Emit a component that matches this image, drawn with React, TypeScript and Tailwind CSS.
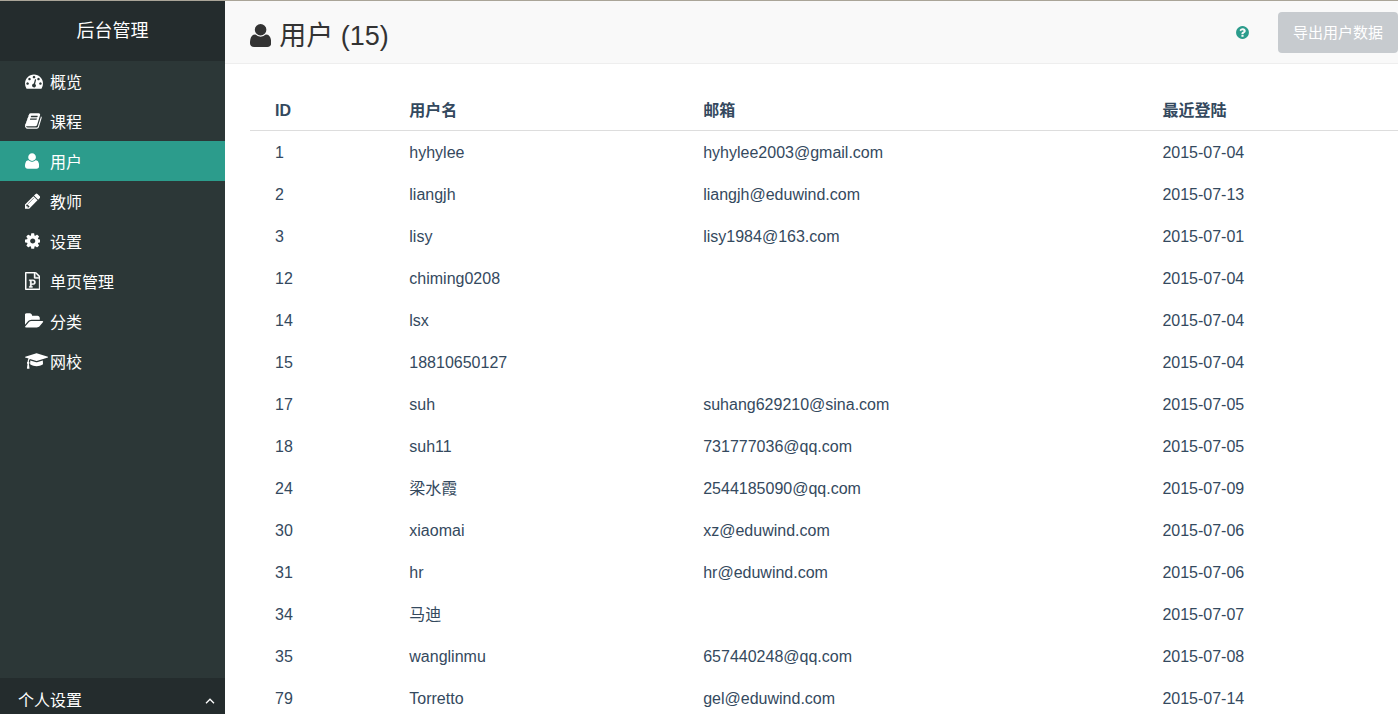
import type { ReactNode } from "react";

type IconProps = { viewBox: string; className: string; children: ReactNode };

function Icon({ viewBox, className, children }: IconProps) {
  return (
    <svg viewBox={viewBox} className={className} fill="currentColor" aria-hidden="true">
      {children}
    </svg>
  );
}

function UserIcon({ className }: { className: string }) {
  return (
    <Icon viewBox="0 0 1408 1792" className={className}>
      <path
        transform="translate(0 1536) scale(1 -1)"
        d="M1408 131q0-120-73-189.5t-194-69.5h-874q-121 0-194 69.5t-73 189.5q0 53 3.5 103.5t14 109t26.5 108.5t43 97.5t62 81t85.5 53.5t111.5 20q9 0 42-21.5t74.5-48t108-48t133.5-21.5t133.5 21.5t108 48t74.5 48t42 21.5q61 0 111.5-20t85.5-53.5t62-81t43-97.5t26.5-108.5t14-109t3.5-103.5zM1088 1024q0-159-112.5-271.5t-271.5-112.5t-271.5 112.5t-112.5 271.5t112.5 271.5t271.5 112.5t271.5-112.5t112.5-271.5z"
      />
    </Icon>
  );
}

const nav: { label: string; icon: ReactNode }[] = [
  {
    label: "概览",
    icon: (
      <Icon viewBox="0 0 1792 1792" className="h-[18px] w-auto">
        <path d="M384 1152q0-53-37.5-90.5t-90.5-37.5-90.5 37.5-37.5 90.5 37.5 90.5 90.5 37.5 90.5-37.5 37.5-90.5zm192-448q0-53-37.5-90.5t-90.5-37.5-90.5 37.5-37.5 90.5 37.5 90.5 90.5 37.5 90.5-37.5 37.5-90.5zm428 481l101-382q6-26-7.5-48.5t-38.5-29.5-48 6.5-30 39.5l-101 382q-60 5-107 43.5t-63 98.5q-20 77 20 146t117 89 146-20 89-117q16-60-6-117t-72-91zm660-33q0-53-37.5-90.5t-90.5-37.5-90.5 37.5-37.5 90.5 37.5 90.5 90.5 37.5 90.5-37.5 37.5-90.5zm-640-640q0-53-37.5-90.5t-90.5-37.5-90.5 37.5-37.5 90.5 37.5 90.5 90.5 37.5 90.5-37.5 37.5-90.5zm448 192q0-53-37.5-90.5t-90.5-37.5-90.5 37.5-37.5 90.5 37.5 90.5 90.5 37.5 90.5-37.5 37.5-90.5zm320 448q0 261-141 483-19 29-54 29h-1402q-35 0-54-29-141-221-141-483 0-182 71-348t191-286 286-191 348-71 348 71 286 191 191 286 71 348z" />
      </Icon>
    ),
  },
  {
    label: "课程",
    icon: (
      <Icon viewBox="64 0 1664 1792" className="h-[18px] w-auto">
        <path d="M1703 478q40 57 18 129l-275 906q-19 64-76.5 107.5t-122.5 43.5h-923q-77 0-148.5-53.5t-99.5-131.5q-24-67-2-127 0-4 3-27t4-37q1-8-3-21.5t-3-19.5q2-11 8-21t16.5-23.5 16.5-23.5q23-38 45-91.5t30-91.5q3-10 .5-30t-.5-28q3-11 17-28t17-23q21-36 42-92t25-90q1-9-2.5-32t.5-28q4-13 22-30.5t22-22.5q19-26 42.5-84.5t27.5-96.5q1-8-3-25.5t-2-26.5q2-8 9-18t18-23 17-21q8-12 16.5-30.5t15-35 16-36 19.5-32 26.5-23.5 36-11.5 47.5 5.5l-1 3q38-9 51-9h761q74 0 114 56t18 130l-274 906q-36 119-71.5 153.5t-128.5 34.5h-869q-27 0-38 15-11 16-1 43 24 70 144 70h923q29 0 56-15.5t35-41.5l300-987q7-22 5-57 38 15 59 43zm-1064 2q-4 13 2 22.5t20 9.5h608q13 0 25.5-9.5t16.5-22.5l21-64q4-13-2-22.5t-20-9.5h-608q-13 0-25.5 9.5t-16.5 22.5zm-83 256q-4 13 2 22.5t20 9.5h608q13 0 25.5-9.5t16.5-22.5l21-64q4-13-2-22.5t-20-9.5h-608q-13 0-25.5 9.5t-16.5 22.5z" />
      </Icon>
    ),
  },
  { label: "用户", icon: <UserIcon className="h-[18px] w-auto" /> },
  {
    label: "教师",
    icon: (
      <Icon viewBox="128 0 1536 1792" className="h-[18px] w-auto">
        <path d="M491 1536l91-91-235-235-91 91v107h128v128h107zm523-928q0-22-22-22-10 0-17 7l-542 542q-7 7-7 17 0 22 22 22 10 0 17-7l542-542q7-7 7-17zm-54-192l416 416-832 832h-416v-416zm683 96q0 53-37 90l-166 166-416-416 166-165q36-38 90-38 53 0 91 38l235 234q37 39 37 91z" />
      </Icon>
    ),
  },
  {
    label: "设置",
    icon: (
      <Icon viewBox="128 0 1536 1792" className="h-[18px] w-auto">
        <path d="M1152 896q0-106-75-181t-181-75-181 75-75 181 75 181 181 75 181-75 75-181zm512-109v222q0 12-8 23t-20 13l-185 28q-19 54-39 91 35 50 107 138 10 12 10 25t-9 23q-27 37-99 108t-94 71q-12 0-26-9l-138-108q-44 23-91 38-16 136-29 186-7 28-36 28h-222q-14 0-24.5-8.5t-11.5-21.5l-28-184q-49-16-90-37l-141 107q-10 9-25 9-14 0-25-11-126-114-165-168-7-10-7-23 0-12 8-23 15-21 51-66.5t54-70.5q-27-50-41-99l-183-27q-13-2-21-12.5t-8-23.5v-222q0-12 8-23t19-13l186-28q14-46 39-92-40-57-107-138-10-12-10-24 0-10 9-23 26-36 98.5-107.5t94.5-71.5q13 0 26 10l138 107q44-23 91-38 16-136 29-186 7-28 36-28h222q14 0 24.5 8.5t11.5 21.5l28 184q49 16 90 37l142-107q9-9 24-9 13 0 25 10 129 119 165 170 7 8 7 22 0 12-8 23-15 21-51 66.5t-54 70.5q26 50 41 98l183 28q13 2 21 12.5t8 23.5z" />
      </Icon>
    ),
  },
  {
    label: "单页管理",
    icon: (
      <Icon viewBox="128 0 1536 1792" className="h-[18px] w-auto">
        <g stroke="currentColor" strokeWidth="36">
          <path d="M1596 380q28 28 48 76t20 88v1152q0 40-28 68t-68 28h-1344q-40 0-68-28t-28-68v-1600q0-40 28-68t68-28h896q40 0 88 20t76 48zm-444-244v376h376q-10-29-22-41l-313-313q-12-12-41-22zm384 1528v-1024h-416q-40 0-68-28t-28-68v-416h-768v1536h1280z" />
          <path d="M544 1430v106h327v-106h-93v-167h137q76 0 118-15 67-23 106.500-87t39.500-146q0-81-37-141t-100-87q-48-19-130-19h-368v107h92v555h-92zm353-280h-119v-268h120q52 0 83 18 56 33 56 115 0 89-62 120-31 15-78 15z" />
        </g>
      </Icon>
    ),
  },
  {
    label: "分类",
    icon: (
      <Icon viewBox="0 0 1856 1792" className="h-[18px] w-auto">
        <path d="M1815 952q0 31-31 66l-336 396q-43 51-120.5 86.5t-143.5 35.5h-1088q-34 0-60.5-13t-26.5-43q0-31 31-66l336-396q43-51 120.5-86.5t143.5-35.5h1088q34 0 60.5 13t26.5 43zm-343-344v160h-832q-94 0-197 47.5t-164 119.5l-337 396-5 6q0-4-.5-12.5t-.5-12.5v-960q0-92 66-158t158-66h320q92 0 158 66t66 158v32h544q92 0 158 66t66 158z" />
      </Icon>
    ),
  },
  {
    label: "网校",
    icon: (
      <Icon viewBox="0 0 2304 1792" className="h-[18px] w-auto">
        <path d="M1774 836l18 316q4 69-82 128t-235 93.5-323 34.5-323-34.5-235-93.5-82-128l18-316 574 181q22 7 48 7t48-7zm530-324q0 23-22 31l-1120 352q-4 1-10 1t-10-1l-652-206q-43 34-71 111.5t-34 178.5q63 36 63 109 0 69-58 107l58 433q2 14-8 25-9 11-24 11h-192q-15 0-24-11-10-11-8-25l58-433q-58-38-58-107 0-73 65-111 11-207 98-330l-333-104q-22-8-22-31t22-31l1120-352q4-1 10-1t10 1l1120 352q22 8 22 31z" />
      </Icon>
    ),
  },
];

const users = [
  ["1", "hyhylee", "hyhylee2003@gmail.com", "2015-07-04"],
  ["2", "liangjh", "liangjh@eduwind.com", "2015-07-13"],
  ["3", "lisy", "lisy1984@163.com", "2015-07-01"],
  ["12", "chiming0208", "", "2015-07-04"],
  ["14", "lsx", "", "2015-07-04"],
  ["15", "18810650127", "", "2015-07-04"],
  ["17", "suh", "suhang629210@sina.com", "2015-07-05"],
  ["18", "suh11", "731777036@qq.com", "2015-07-05"],
  ["24", "梁水霞", "2544185090@qq.com", "2015-07-09"],
  ["30", "xiaomai", "xz@eduwind.com", "2015-07-06"],
  ["31", "hr", "hr@eduwind.com", "2015-07-06"],
  ["34", "马迪", "", "2015-07-07"],
  ["35", "wanglinmu", "657440248@qq.com", "2015-07-08"],
  ["79", "Torretto", "gel@eduwind.com", "2015-07-14"],
];

export default function App() {
  return (
    <div className="flex h-screen overflow-hidden border-t border-[#aaa598] bg-white font-['Liberation_Sans','Noto_Sans_CJK_SC',sans-serif] text-base text-[#34495e]">
      <aside className="flex w-[225px] shrink-0 flex-col bg-[#2c3737] text-white">
        <div className="flex h-[60px] shrink-0 items-center justify-center bg-[#242c2d] text-lg">后台管理</div>
        <nav className="min-h-0 flex-1 overflow-hidden">
          <ul>
            {nav.map((item) => (
              <li key={item.label}>
                <a
                  href="#"
                  aria-current={item.label === "用户" ? "page" : undefined}
                  className="flex h-10 items-center pt-1 pl-[25px] aria-[current=page]:bg-[#2c9c8c]"
                >
                  <span className="w-[25px] shrink-0 pb-1">{item.icon}</span>
                  <span>{item.label}</span>
                </a>
              </li>
            ))}
          </ul>
        </nav>
        <button
          type="button"
          className="flex h-9 shrink-0 items-center justify-between bg-[#242c2d] pt-2.5 pr-2.5 pl-[18px]"
        >
          <span>个人设置</span>
          <svg viewBox="0 0 10 6" className="h-1.5 w-2.5" fill="none" stroke="currentColor" strokeWidth="1.3" aria-hidden="true">
            <path d="M1 5.300L5 1.200L9 5.300" />
          </svg>
        </button>
      </aside>

      <main className="flex min-w-0 flex-1 flex-col">
        <header className="flex h-[63px] shrink-0 items-center justify-between border-b border-[#eeeeee] bg-[#f9f9f9] pl-[25px]">
          <h1 className="flex items-center gap-2 pt-2 text-[27px] leading-9 text-[#333333]">
            <span className="pb-0.5">
              <UserIcon className="h-[27px] w-auto" />
            </span>
            <span>用户 (15)</span>
          </h1>
          <div className="flex items-center gap-7">
            <button type="button" aria-label="帮助" className="text-[#2c9c8c]">
              <Icon viewBox="0 0 1792 1792" className="size-[15px]">
                <path d="M1024 1376v-192q0-14-9-23t-23-9h-192q-14 0-23 9t-9 23v192q0 14 9 23t23 9h192q14 0 23-9t9-23zm256-672q0-88-55.5-163t-138.5-116-170-41q-243 0-371 213-15 24 8 42l132 100q7 6 19 6 16 0 25-12 53-68 86-92 34-24 86-24 48 0 85.5 26t37.5 59q0 38-20 61t-68 45q-63 28-115.5 86.5t-52.5 125.5v36q0 14 9 23t23 9h192q14 0 23-9t9-23q0-19 21.5-49.5t54.5-49.5q32-18 49-28.5t46-35 44.5-48 28-60.5 12.5-81zm384 192q0 209-103 385.5t-279.5 279.5-385.5 103-385.5-103-279.5-279.5-103-385.5 103-385.5 279.5-279.5 385.5-103 385.5 103 279.5 279.500 103 385.500z" />
              </Icon>
            </button>
            <button type="button" className="h-[41px] rounded bg-[#c7cbcf] px-[15px] pt-0.5 text-[15px] text-white">
              导出用户数据
            </button>
          </div>
        </header>

        <div className="min-h-0 flex-1 overflow-y-auto pt-6 pl-[25px] [scrollbar-width:none]">
          <table className="w-full table-fixed text-left leading-6">
            <colgroup>
              <col className="w-[11.7%]" />
              <col className="w-[25.6%]" />
              <col className="w-[40%]" />
              <col />
            </colgroup>
            <thead>
              <tr className="h-[42px] border-b border-[#dddddd]">
                {["ID", "用户名", "邮箱", "最近登陆"].map((title) => (
                  <th key={title} scope="col" className="pt-1 pl-[25px] font-bold">
                    {title}
                  </th>
                ))}
              </tr>
            </thead>
            <tbody>
              {users.map((user) => (
                <tr key={user[0]} className="h-[42px]">
                  {user.map((value, i) => (
                    <td key={i} className="pt-1 pl-[25px]">
                      {value}
                    </td>
                  ))}
                </tr>
              ))}
            </tbody>
          </table>
        </div>
      </main>
    </div>
  );
}
